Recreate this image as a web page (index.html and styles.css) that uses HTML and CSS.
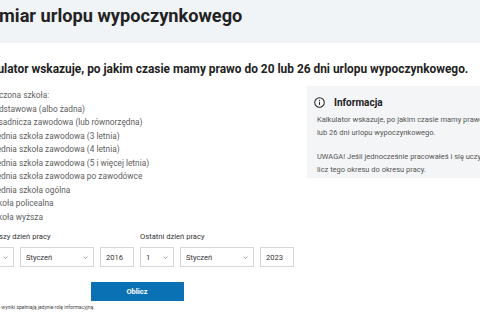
FILE: index.html
```html
<!DOCTYPE html>
<html lang="pl">
<head>
    <meta charset="UTF-8">
    <meta name="viewport" content="width=device-width, initial-scale=1.0">
    <title>Wymiar urlopu wypoczynkowego</title>
    <link rel="stylesheet" href="styles.css">
</head>
<body>
    <header class="page-head">
        <div class="wrap">
            <h1>Wymiar urlopu wypoczynkowego</h1>
        </div>
    </header>

    <main class="wrap">
        <p class="lead">Kalkulator wskazuje, po jakim czasie mamy prawo do 20 lub 26 dni urlopu wypoczynkowego.</p>

        <div class="calc">
            <form class="calc-form">
                <div class="school">
                    <div class="school-title">Ukończona szkoła:</div>
                    <label class="option"><span class="radio"></span>Podstawowa (albo żadna)</label>
                    <label class="option"><span class="radio"></span>Zasadnicza zawodowa (lub równorzędna)</label>
                    <label class="option"><span class="radio"></span>Średnia szkoła zawodowa (3 letnia)</label>
                    <label class="option"><span class="radio"></span>Średnia szkoła zawodowa (4 letnia)</label>
                    <label class="option"><span class="radio"></span>Średnia szkoła zawodowa (5 i więcej letnia)</label>
                    <label class="option"><span class="radio"></span>Średnia szkoła zawodowa po zawodówce</label>
                    <label class="option"><span class="radio"></span>Średnia szkoła ogólna</label>
                    <label class="option"><span class="radio"></span>Szkoła policealna</label>
                    <label class="option"><span class="radio"></span>Szkoła wyższa</label>
                </div>

                <div class="dates">
                    <div class="date-group">
                        <div class="date-label">Pierwszy dzień pracy</div>
                        <div class="date-fields">
                            <div class="field select day"><span>1</span><svg class="chev" viewBox="0 0 8 5"><path d="M1 1l3 3 3-3"/></svg></div>
                            <div class="field select month"><span>Styczeń</span><svg class="chev" viewBox="0 0 8 5"><path d="M1 1l3 3 3-3"/></svg></div>
                            <div class="field year">2016</div>
                        </div>
                    </div>
                    <div class="date-group">
                        <div class="date-label">Ostatni dzień pracy</div>
                        <div class="date-fields">
                            <div class="field select day"><span>1</span><svg class="chev" viewBox="0 0 8 5"><path d="M1 1l3 3 3-3"/></svg></div>
                            <div class="field select month"><span>Styczeń</span><svg class="chev" viewBox="0 0 8 5"><path d="M1 1l3 3 3-3"/></svg></div>
                            <div class="field year">2023</div>
                        </div>
                    </div>
                </div>

                <div class="actions">
                    <button type="button">Oblicz</button>
                </div>
                <p class="note">Otrzymane wyniki spełniają jedynie rolę informacyjną.</p>
            </form>

            <aside class="info">
                <div class="info-head">
                    <svg class="info-icon" viewBox="0 0 12 12"><circle cx="6" cy="6" r="5.2"/><path d="M6 5.3v3.3"/><circle class="dot" cx="6" cy="3.6" r="0.7"/></svg>
                    <span>Informacja</span>
                </div>
                <p>Kalkulator wskazuje, po jakim czasie mamy prawo do 20 lub 26 dni urlopu wypoczynkowego.</p>
                <p>UWAGA! Jeśli jednocześnie pracowałeś i się uczyłeś, nie licz tego okresu do okresu pracy.</p>
            </aside>
        </div>
    </main>
</body>
</html>
```

FILE: styles.css
```css
:root {
    --text-color: #222222;
    --muted-color: #606060;
    --head-bg: #f1f4f7;
    --box-bg: #f3f5f7;
    --border-color: #d6d6d6;
    --primary-color: #0a72b4;
}
html, body {
    overflow: hidden;
}
body {
    margin: 0;
    font-family: Roboto, "Liberation Sans", Arial, sans-serif;
    color: var(--text-color);
    background: #ffffff;
}
.wrap {
    margin-left: -26px;
    width: 560px;
}
.page-head {
    background: var(--head-bg);
    height: 43px;
}
.page-head h1 {
    margin: 0;
    padding-top: 5px;
    font-size: 18.2px;
    line-height: 22px;
    font-weight: 700;
}
.lead {
    margin: 18px 0 0;
    font-size: 11.9px;
    line-height: 16px;
    font-weight: 700;
}
.calc {
    display: flex;
    gap: 12px;
    margin-top: 12px;
}
.calc-form {
    width: 321px;
    flex-shrink: 0;
}
.school {
    font-size: 8.3px;
    color: var(--muted-color);
}
.school-title {
    line-height: 13.5px;
    padding-left: 6px;
}
.option {
    display: flex;
    align-items: center;
    line-height: 13.5px;
}
.radio {
    width: 7px;
    height: 7px;
    border: 1px solid #9a9a9a;
    border-radius: 50%;
    margin-right: 6px;
    flex-shrink: 0;
}
.dates {
    display: flex;
    gap: 6px;
    margin-top: 8px;
    margin-left: 6px;
}
.date-label {
    font-size: 7.6px;
    line-height: 10px;
    color: #333333;
    margin-bottom: 5px;
}
.date-fields {
    display: flex;
    gap: 6px;
}
.field {
    height: 20px;
    box-sizing: border-box;
    border: 1px solid var(--border-color);
    font-size: 7.5px;
    color: #333333;
    display: flex;
    align-items: center;
    padding: 0 5px;
}
.select {
    justify-content: space-between;
}
.day {
    width: 34px;
}
.month {
    width: 74px;
}
.year {
    width: 34px;
}
.chev {
    width: 5px;
    height: 3px;
    fill: none;
    stroke: #777777;
    stroke-width: 1.2;
}
.actions {
    display: flex;
    justify-content: center;
    margin-top: 15px;
}
.actions button {
    width: 93px;
    height: 19px;
    margin-left: 5px;
    border: none;
    background: var(--primary-color);
    color: #ffffff;
    font-family: Roboto, "Liberation Sans", Arial, sans-serif;
    font-size: 7.5px;
    font-weight: 700;
}
.note {
    margin: 3px 0 0;
    font-size: 5px;
    color: #444444;
    margin-left: 2px;
}
.info {
    width: 214px;
    flex-shrink: 0;
    margin-top: -3px;
    align-self: flex-start;
    background: var(--box-bg);
    padding: 11px 10px 6px 10px;
    box-sizing: border-box;
    height: 92px;
}
.info-head {
    display: flex;
    align-items: center;
    gap: 9px;
    margin-left: -3px;
    font-size: 10px;
    font-weight: 700;
    margin-bottom: 5px;
}
.info-icon {
    width: 11px;
    height: 11px;
    fill: none;
    stroke: #222222;
    stroke-width: 1.1;
}
.info-icon .dot {
    fill: #222222;
    stroke: none;
}
.info p {
    margin: 0 0 11px;
    font-size: 7.5px;
    line-height: 13px;
    color: #555555;
}
```
